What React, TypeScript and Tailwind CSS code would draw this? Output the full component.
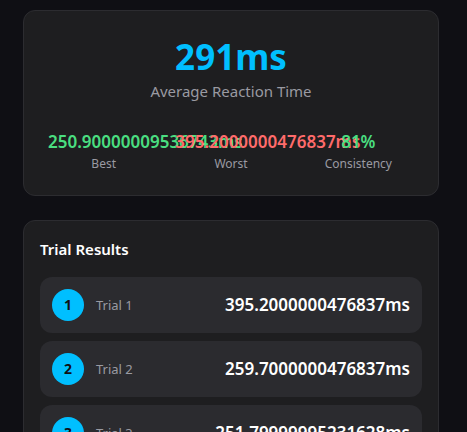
const stats = [
  { label: "Best", value: "250.90000009536743ms", color: "text-[#4ade80]" },
  { label: "Worst", value: "395.2000000476837ms", color: "text-[#ff6b6b]" },
  { label: "Consistency", value: "81%", color: "text-[#4ade80]" },
];

const trials = ["395.2000000476837ms", "259.7000000476837ms", "251.79999995231628ms"];

function Summary() {
  return (
    <section className="rounded-xl border border-[#2c2c30] bg-[#1e1e20] p-6 text-center">
      <div className="text-[35px] leading-[44px] font-bold text-[#00bfff]">291ms</div>
      <div className="text-[15px] leading-6 text-[#9a9aa2]">Average Reaction Time</div>
      <dl className="mt-6 grid grid-cols-3 gap-4">
        {stats.map((stat) => (
          <div key={stat.label} className="flex min-w-0 flex-col-reverse">
            <dt className="text-xs leading-[14px] text-[#9a9aa2]">{stat.label}</dt>
            <dd className={`text-[17px] leading-[30px] font-semibold ${stat.color}`}>{stat.value}</dd>
          </div>
        ))}
      </dl>
    </section>
  );
}

function TrialResults() {
  return (
    <section className="rounded-xl border border-[#2c2c30] bg-[#1e1e20] p-4">
      <h2 className="text-[15px] leading-6 font-semibold text-white">Trial Results</h2>
      <ol className="mt-4 flex flex-col gap-2">
        {trials.map((value, index) => (
          <li key={index} className="flex items-center justify-between rounded-xl bg-[#2b2b2f] p-3">
            <div className="flex items-center gap-3">
              <span className="flex size-8 items-center justify-center rounded-full bg-[#00bfff] text-sm font-bold text-[#101014]">
                {index + 1}
              </span>
              <span className="text-[13px] leading-5 text-[#9a9aa2]">Trial {index + 1}</span>
            </div>
            <span className="text-[17px] leading-[30px] font-semibold text-white">{value}</span>
          </li>
        ))}
      </ol>
    </section>
  );
}

export default function App() {
  return (
    <main className="flex h-screen flex-col gap-6 overflow-hidden bg-[#0f0f14] pt-[10px] pr-7 pl-[23px] font-['Noto_Sans',sans-serif] *:shrink-0">
      <Summary />
      <TrialResults />
    </main>
  );
}
